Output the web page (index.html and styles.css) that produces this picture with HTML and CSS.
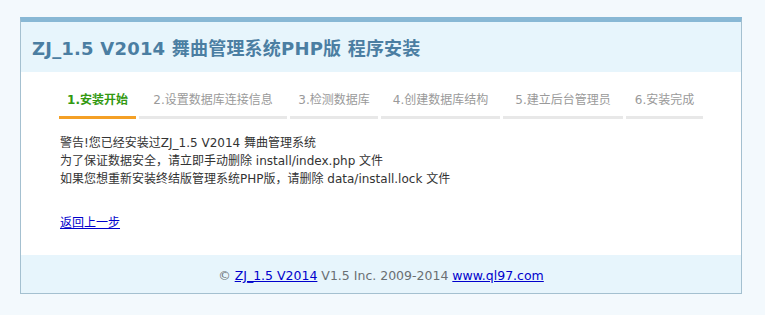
FILE: index.html
```html
<!DOCTYPE html>
<html lang="zh-CN">
<head>
<meta charset="utf-8">
<title>ZJ_1.5 V2014 舞曲管理系统PHP版 程序安装</title>
<link rel="stylesheet" href="styles.css">
</head>
<body>
<div class="wrap">
  <div class="head">
    <h1 class="title">ZJ_1.5 V2014 舞曲管理系统PHP版 程序安装</h1>
  </div>
  <div class="main">
    <ul class="steps">
      <li class="step active">1.安装开始</li>
      <li class="step">2.设置数据库连接信息</li>
      <li class="step">3.检测数据库</li>
      <li class="step">4.创建数据库结构</li>
      <li class="step">5.建立后台管理员</li>
      <li class="step">6.安装完成</li>
    </ul>
    <div class="msg">
      <p class="line">警告!您已经安装过ZJ_1.5 V2014 舞曲管理系统</p>
      <p class="line">为了保证数据安全，请立即手动删除 install/index.php 文件</p>
      <p class="line">如果您想重新安装终结版管理系统PHP版，请删除 data/install.lock 文件</p>
    </div>
    <p class="back"><a href="#" class="link">返回上一步</a></p>
  </div>
  <div class="foot">
    © <a href="#" class="link">ZJ_1.5 V2014</a> V1.5 Inc. 2009-2014 <a href="#" class="link">www.ql97.com</a>
  </div>
</div>
</body>
</html>
```
FILE: styles.css
```css
html, body {
  margin: 0;
  padding: 0;
}
body {
  background: #f3f9fd;
  font-family: "DejaVu Sans", "Noto Sans CJK SC", sans-serif;
  font-size: 12px;
  color: #333;
}
.wrap {
  margin: 17px 0 0 20px;
  width: 720px;
  border: 1px solid #a4c0d0;
  border-top: 5px solid #88b8d5;
  background: #fff;
}
.head {
  height: 50px;
  background: #e7f5fc;
  padding-left: 11px;
  display: flex;
  align-items: center;
}
.title {
  margin: 0;
  font-size: 18px;
  font-weight: bold;
  color: #4b7ea2;
  letter-spacing: 0.2px;
}
.main {
  padding: 19px 0 23px 38px;
}
.steps {
  list-style: none;
  margin: 0;
  padding: 0;
  display: flex;
  gap: 3px;
}
.step {
  line-height: 18px;
  padding-bottom: 7px;
  border-bottom: 3px solid #e8e8e8;
  text-align: center;
  color: #9a9a9a;
  white-space: nowrap;
}
.step:nth-child(1) { width: 77px; }
.step:nth-child(2) { width: 148px; }
.step:nth-child(3) { width: 88px; }
.step:nth-child(4) { width: 119px; }
.step:nth-child(5) { width: 120px; }
.step:nth-child(6) { width: 77px; }
.step.active {
  color: #339911;
  font-weight: bold;
  border-bottom-color: #f4a026;
}
.msg {
  margin-top: 15px;
  padding-left: 1px;
}
.line {
  margin: 0;
  line-height: 18px;
}
.back {
  margin: 26px 0 0 0;
  padding-left: 1px;
  line-height: 18px;
}
.link {
  color: #0000cc;
  text-decoration: underline;
}
.foot {
  height: 36px;
  padding-top: 2px;
  line-height: 38px;
  background: #e7f5fc;
  text-align: center;
  color: #6a6f73;
  font-size: 12.5px;
}
```
